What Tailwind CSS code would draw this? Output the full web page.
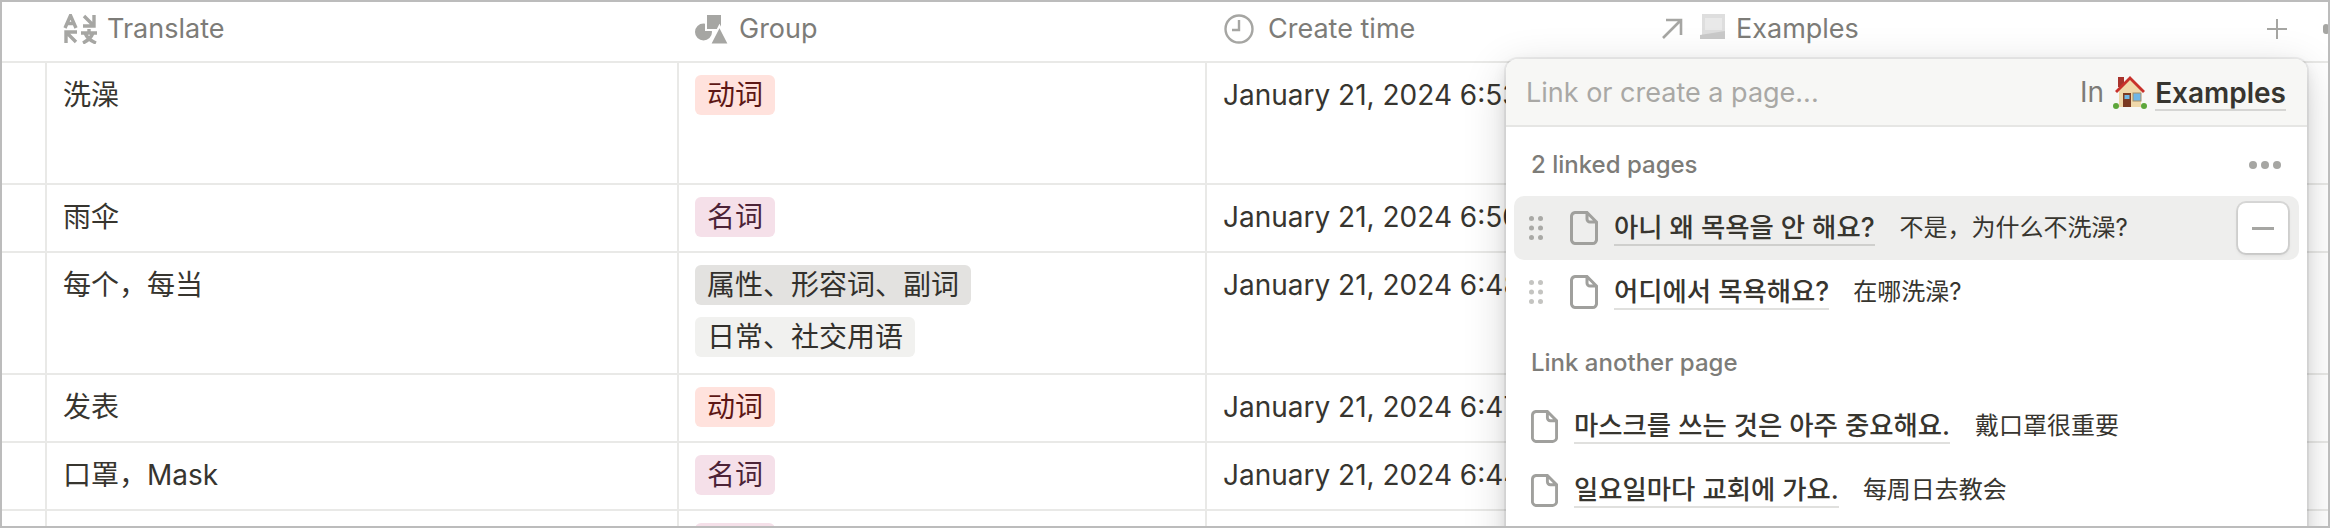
<!DOCTYPE html>
<html lang="en">
<head>
  <meta charset="UTF-8" />
  <title>Vocabulary table</title>
  <script src="https://cdn.jsdelivr.net/npm/@tailwindcss/browser@4"></script>
</head>
<body class="bg-white">
  <div class="relative w-[2330px] h-[528px] overflow-hidden bg-white border-2 border-[#bcbcbc] font-['Inter','Noto_Sans_CJK_SC',sans-serif] text-[28px] text-[#37352f]">

    <!-- Header -->
    <div class="flex h-[61px] border-b-2 border-[#e9e9e7] text-[#7d7c78] text-[27px]">
      <div class="w-[45px] shrink-0"></div>
      <div class="w-[632px] shrink-0 pl-4 flex items-center gap-[10px] pb-[5px]">
        <svg class="w-[34px] h-[30px]" viewBox="0 0 34 30" fill="none" stroke="#a6a6a3" stroke-width="3.4">
          <path d="M2 14 L7.500 1.500 L13 14 M4 9.500 H11" />
          <path d="M31 1 V12 H20 M31 12 L21 2" />
          <path d="M3 29 V18 H14 M3 18 L13 28" />
          <path d="M18 19 H34 M26 15 V19 M30 19 C28 24 24 27 20 29 M22 19 C24 24 28 27 33 29" />
        </svg>
        <span>Translate</span>
      </div>
      <div class="w-[528px] shrink-0 pl-4 flex items-center gap-[11px] pb-[5px]">
        <svg class="w-[33px] h-[30px]" viewBox="0 -1 33 30" fill="#a6a6a3">
          <circle cx="8.500" cy="17" r="8.500" />
          <rect x="11" y="-1" width="16" height="16" stroke="#fff" stroke-width="2" />
          <path d="M24.500 11 L34 29.500 H15 Z" stroke="#fff" stroke-width="2" />
        </svg>
        <span>Group</span>
      </div>
      <div class="w-[442px] shrink-0 pl-[17px] flex items-center gap-[14px] pb-[5px]">
        <svg class="w-[30px] h-[30px]" viewBox="0 0 30 30" fill="none" stroke="#a6a6a3" stroke-width="2.4">
          <circle cx="15" cy="15" r="13.500" />
          <path d="M15 6 V16 H8" />
        </svg>
        <span>Create time</span>
      </div>
      <div class="flex-1 flex items-center pl-[12px] pb-[5px]">
        <svg class="w-[22px] h-[22px]" viewBox="0 0 22 22" fill="none" stroke="#a6a6a3" stroke-width="2.6">
          <path d="M2 20 L20 2 M5 2 H20 V17" />
        </svg>
        <svg class="w-[26px] h-[26px] ml-[17px] mb-[4px]" viewBox="0 0 26 26">
          <rect x="2" y="0" width="23" height="21" fill="#dedede" />
          <rect x="5" y="4" width="17" height="12" fill="#e9e9e9" />
          <path d="M0 21 L25 17 V25 H0 Z" fill="#c9c9c9" />
        </svg>
        <span class="ml-[10px]">Examples</span>
        <svg class="w-[22px] h-[22px] ml-[407px]" viewBox="0 0 22 22" stroke="#a6a6a3" stroke-width="2">
          <path d="M11 1 V21 M1 11 H21" />
        </svg>
        <i class="block w-[6px] h-[10px] ml-[35px] rounded-full bg-[#a6a6a3]"></i>
      </div>
    </div>

    <!-- Rows -->
    <div class="flex h-[122px] border-b-2 border-[#e9e9e7]">
      <div class="w-[45px] shrink-0 border-r-2 border-[#e9e9e7]"></div>
      <div class="w-[632px] shrink-0 border-r-2 border-[#e9e9e7] pl-4 pt-3 leading-10">洗澡</div>
      <div class="w-[528px] shrink-0 border-r-2 border-[#e9e9e7] pl-4 pt-3">
        <span class="block w-fit h-10 px-3 rounded-md leading-10 bg-[#ffe2dd] text-[#5d1715]">动词</span>
      </div>
      <div class="flex-1 pl-4 pt-3 leading-10">January 21, 2024 6:53 PM</div>
    </div>
    <div class="flex h-[68px] border-b-2 border-[#e9e9e7]">
      <div class="w-[45px] shrink-0 border-r-2 border-[#e9e9e7]"></div>
      <div class="w-[632px] shrink-0 border-r-2 border-[#e9e9e7] pl-4 pt-3 leading-10">雨伞</div>
      <div class="w-[528px] shrink-0 border-r-2 border-[#e9e9e7] pl-4 pt-3">
        <span class="block w-fit h-10 px-3 rounded-md leading-10 bg-[#f5e0e9] text-[#4c2337]">名词</span>
      </div>
      <div class="flex-1 pl-4 pt-3 leading-10">January 21, 2024 6:50 PM</div>
    </div>
    <div class="flex h-[122px] border-b-2 border-[#e9e9e7]">
      <div class="w-[45px] shrink-0 border-r-2 border-[#e9e9e7]"></div>
      <div class="w-[632px] shrink-0 border-r-2 border-[#e9e9e7] pl-4 pt-3 leading-10">每个，每当</div>
      <div class="w-[528px] shrink-0 border-r-2 border-[#e9e9e7] pl-4 pt-3 flex flex-col gap-3">
        <span class="block w-fit h-10 px-3 rounded-md leading-10 bg-[#e3e2e0] text-[#32302c]">属性、形容词、副词</span>
        <span class="block w-fit h-10 px-3 rounded-md leading-10 bg-[#f1f1ef] text-[#32302c]">日常、社交用语</span>
      </div>
      <div class="flex-1 pl-4 pt-3 leading-10">January 21, 2024 6:48 PM</div>
    </div>
    <div class="flex h-[68px] border-b-2 border-[#e9e9e7]">
      <div class="w-[45px] shrink-0 border-r-2 border-[#e9e9e7]"></div>
      <div class="w-[632px] shrink-0 border-r-2 border-[#e9e9e7] pl-4 pt-3 leading-10">发表</div>
      <div class="w-[528px] shrink-0 border-r-2 border-[#e9e9e7] pl-4 pt-3">
        <span class="block w-fit h-10 px-3 rounded-md leading-10 bg-[#ffe2dd] text-[#5d1715]">动词</span>
      </div>
      <div class="flex-1 pl-4 pt-3 leading-10">January 21, 2024 6:47 PM</div>
    </div>
    <div class="flex h-[68px] border-b-2 border-[#e9e9e7]">
      <div class="w-[45px] shrink-0 border-r-2 border-[#e9e9e7]"></div>
      <div class="w-[632px] shrink-0 border-r-2 border-[#e9e9e7] pl-4 pt-3 leading-10">口罩，Mask</div>
      <div class="w-[528px] shrink-0 border-r-2 border-[#e9e9e7] pl-4 pt-3">
        <span class="block w-fit h-10 px-3 rounded-md leading-10 bg-[#f5e0e9] text-[#4c2337]">名词</span>
      </div>
      <div class="flex-1 pl-4 pt-3 leading-10">January 21, 2024 6:44 PM</div>
    </div>
    <div class="flex h-[68px]">
      <div class="w-[45px] shrink-0 border-r-2 border-[#e9e9e7]"></div>
      <div class="w-[632px] shrink-0 border-r-2 border-[#e9e9e7] pl-4 pt-3 leading-10"></div>
      <div class="w-[528px] shrink-0 border-r-2 border-[#e9e9e7] pl-4 pt-3">
        <span class="block w-fit h-10 px-3 rounded-md leading-10 bg-[#f5e0e9] text-[#4c2337]">名词</span>
      </div>
      <div class="flex-1"></div>
    </div>

    <!-- Relation popup -->
    <div class="absolute left-[1504px] top-[57px] w-[801px] h-[520px] bg-white rounded-xl shadow-[0_0_0_2px_rgba(15,15,15,0.06),0_6px_14px_rgba(15,15,15,0.1),0_10px_44px_rgba(15,15,15,0.16)]">
      <div class="h-[68px] flex items-center pl-[20px] pr-[21px] bg-[#f7f7f5] border-b-2 border-[#e6e6e4] rounded-t-xl">
        <span class="text-[27px] mt-[2px] text-[#a9a8a5]">Link or create a page...</span>
        <span class="ml-auto text-[#7d7c78]">In</span>
        <svg class="w-[34px] h-[34px] ml-[9px]" viewBox="0 0 34 34">
          <rect x="5" y="2" width="6" height="10" fill="#a8332c" />
          <path d="M6 15 L17 4 L28 15 V32 H6 Z" fill="#f0d8aa" />
          <path d="M2 16 L17 1 L32 16 L30 18 L17 5 L4 18 Z" fill="#c8312b" />
          <rect x="10" y="18" width="8" height="14" fill="#7b3a22" />
          <rect x="11.500" y="20" width="5" height="4" fill="#6fb6e6" />
          <rect x="20" y="18" width="8" height="8" fill="#6fb6e6" stroke="#a88f66" />
          <circle cx="3" cy="31" r="3" fill="#5da63a" />
          <circle cx="31" cy="31" r="3" fill="#5da63a" />
        </svg>
        <span class="ml-[8px] font-semibold leading-[32px] mt-[3px] border-b-2 border-[#d6d6d4]">Examples</span>
      </div>

      <div class="flex justify-between items-center h-[69px] pt-[7px] pl-[25px] pr-[26px] text-[24px] font-medium text-[#7d7c78]">
        <span>2 linked pages</span>
        <span class="flex gap-[4px]">
          <i class="block w-[8px] h-[8px] rounded-full bg-[#a6a6a3]"></i>
          <i class="block w-[8px] h-[8px] rounded-full bg-[#a6a6a3]"></i>
          <i class="block w-[8px] h-[8px] rounded-full bg-[#a6a6a3]"></i>
        </span>
      </div>

      <div class="mx-2 h-16 flex items-center pl-[15px] pr-[11px] bg-[#eeeeed] rounded-[10px]">
        <svg class="w-[14px] h-[24px]" viewBox="0 0 14 24" fill="#a9a9a6">
          <circle cx="2.500" cy="2.500" r="2.500" /><circle cx="11.500" cy="2.500" r="2.500" />
          <circle cx="2.500" cy="12" r="2.500" /><circle cx="11.500" cy="12" r="2.500" />
          <circle cx="2.500" cy="21.500" r="2.500" /><circle cx="11.500" cy="21.500" r="2.500" />
        </svg>
        <svg class="w-[28px] h-[34px] ml-[27px]" viewBox="0 0 28 34" fill="none" stroke="#a0a09d" stroke-width="3">
          <path d="M5 1.500 H17 L26.500 11 V28 A4 4 0 0 1 22.500 32.500 H5 A4 4 0 0 1 1.500 28 V5 A4 4 0 0 1 5 1.500 Z M17 1.500 V8 A3 3 0 0 0 20 11 H26.500" />
        </svg>
        <span class="ml-[16px] text-[26.4px] font-medium font-['Inter','Noto_Sans_CJK_KR',sans-serif] leading-[34px] border-b-2 border-[#cfcfcd]">아니 왜 목욕을 안 해요?</span>
        <span class="ml-[25px] text-[24px]">不是，为什么不洗澡?</span>
        <span class="ml-auto w-[50px] h-[50px] flex items-center justify-center bg-white rounded-lg shadow-[0_0_0_2px_rgba(15,15,15,0.1),0_2px_4px_rgba(15,15,15,0.1)]">
          <i class="block w-[22px] h-[3px] bg-[#a6a6a3]"></i>
        </span>
      </div>
      <div class="mx-2 h-16 flex items-center pl-[15px] pr-[11px]">
        <svg class="w-[14px] h-[24px]" viewBox="0 0 14 24" fill="#c4c4c1">
          <circle cx="2.500" cy="2.500" r="2.500" /><circle cx="11.500" cy="2.500" r="2.500" />
          <circle cx="2.500" cy="12" r="2.500" /><circle cx="11.500" cy="12" r="2.500" />
          <circle cx="2.500" cy="21.500" r="2.500" /><circle cx="11.500" cy="21.500" r="2.500" />
        </svg>
        <svg class="w-[28px] h-[34px] ml-[27px]" viewBox="0 0 28 34" fill="none" stroke="#a0a09d" stroke-width="3">
          <path d="M5 1.500 H17 L26.500 11 V28 A4 4 0 0 1 22.500 32.500 H5 A4 4 0 0 1 1.500 28 V5 A4 4 0 0 1 5 1.500 Z M17 1.500 V8 A3 3 0 0 0 20 11 H26.500" />
        </svg>
        <span class="ml-[16px] text-[26.4px] font-medium font-['Inter','Noto_Sans_CJK_KR',sans-serif] leading-[34px] border-b-2 border-[#e0e0de]">어디에서 목욕해요?</span>
        <span class="ml-[24px] text-[24px]">在哪洗澡?</span>
      </div>

      <div class="h-[70px] pt-[19px] pl-[25px] text-[24px] font-medium leading-10 text-[#7d7c78]">Link another page</div>

      <div class="h-16 flex items-center pl-[25px]">
        <svg class="w-[27px] h-[33px]" viewBox="0 0 28 34" fill="none" stroke="#a0a09d" stroke-width="3">
          <path d="M5 1.500 H17 L26.500 11 V28 A4 4 0 0 1 22.500 32.500 H5 A4 4 0 0 1 1.500 28 V5 A4 4 0 0 1 5 1.500 Z M17 1.500 V8 A3 3 0 0 0 20 11 H26.500" />
        </svg>
        <span class="ml-[16px] text-[26.4px] font-medium font-['Inter','Noto_Sans_CJK_KR',sans-serif] leading-[34px] border-b-2 border-[#e0e0de]">마스크를 쓰는 것은 아주 중요해요.</span>
        <span class="ml-[25px] text-[24px]">戴口罩很重要</span>
      </div>
      <div class="h-16 flex items-center pl-[25px]">
        <svg class="w-[27px] h-[33px]" viewBox="0 0 28 34" fill="none" stroke="#a0a09d" stroke-width="3">
          <path d="M5 1.500 H17 L26.500 11 V28 A4 4 0 0 1 22.500 32.500 H5 A4 4 0 0 1 1.500 28 V5 A4 4 0 0 1 5 1.500 Z M17 1.500 V8 A3 3 0 0 0 20 11 H26.500" />
        </svg>
        <span class="ml-[16px] text-[26.4px] font-medium font-['Inter','Noto_Sans_CJK_KR',sans-serif] leading-[34px] border-b-2 border-[#e0e0de]">일요일마다 교회에 가요.</span>
        <span class="ml-[24px] text-[24px]">每周日去教会</span>
      </div>
    </div>
  </div>
</body>
</html>
